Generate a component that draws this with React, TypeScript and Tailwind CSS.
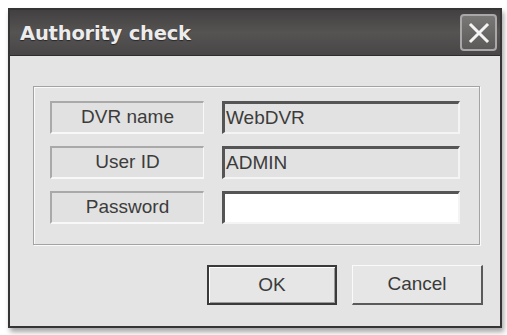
export default function App() {
  return (
    <div className="w-[507px] h-[335px] bg-white pt-[8px] pl-[8px] font-['Liberation_Sans',Arial,sans-serif]">
      <div className="w-[494px] h-[320px] border-2 border-[#353535] bg-[#e4e4e4] flex flex-col shadow-[2px_4px_5px_rgba(0,0,0,0.35)]">
        {/* title bar */}
        <div className="h-[46px] shrink-0 flex items-center justify-between pl-[10px] pr-[3px] bg-gradient-to-b from-[#424040] via-[#565353] to-[#484646] border-b border-[#2e2e2e]">
          <span className="font-['DejaVu_Sans',sans-serif] font-bold text-[19.5px] mt-[3px] text-[#ececec] tracking-[-0.2px] [text-shadow:0_1px_1px_rgba(0,0,0,0.5)]">
            Authority check
          </span>
          <div className="w-[37px] h-[37px] rounded-[4px] border-2 border-[#a9a7a7] bg-gradient-to-b from-[#7a7777] to-[#5c5959] flex items-center justify-center">
            <svg width="24" height="24" viewBox="0 0 24 24">
              <path d="M4 4 L20 20 M20 4 L4 20" stroke="#f4f4f4" strokeWidth="3" strokeLinecap="square" />
            </svg>
          </div>
        </div>

        {/* body */}
        <div className="flex-1 pt-[30px] pl-[23px] pr-[10px] flex flex-col">
          <div className="w-[447px] h-[159px] border border-[#a3a3a3] shadow-[inset_1px_1px_0_#fafafa,1px_1px_0_#fafafa] pt-[14px] pl-[16px] flex flex-col gap-[12px]">
            <Row label="DVR name" value="WebDVR" />
            <Row label="User ID" value="ADMIN" />
            <Row label="Password" value="" white />
          </div>

          <div className="mt-[20px] pl-[174px] flex gap-[15px]">
            <button className="w-[130px] h-[40px] border-2 border-[#3a3a3a] bg-[#e6e6e6] shadow-[inset_1px_1px_0_#fff,inset_-1px_-1px_0_#9a9a9a] text-[19px] text-[#3a3a3a]">
              OK
            </button>
            <button className="w-[131px] h-[40px] border-t border-l border-[#fafafa] border-r-2 border-b-2 border-r-[#5a5a5a] border-b-[#5a5a5a] bg-[#e6e6e6] text-[19px] text-[#3a3a3a]">
              Cancel
            </button>
          </div>
        </div>
      </div>
    </div>
  );
}

function Row({ label, value, white }: { label: string; value: string; white?: boolean }) {
  return (
    <div className="flex gap-[18px] h-[33px]">
      <div className="w-[154px] h-full border-t-2 border-l-2 border-t-[#a9a9a9] border-l-[#a9a9a9] border-b-2 border-r border-b-[#f8f8f8] border-r-[#f8f8f8] bg-[#e1e1e1] flex items-center justify-center text-[19px] text-[#3c3c3c]">
        {label}
      </div>
      <div
        className={
          white
            ? "w-[238px] h-full border-t-[3px] border-l-[3px] border-t-[#555] border-l-[#555] border-b-2 border-r-2 border-b-[#f4f4f4] border-r-[#f4f4f4] bg-white flex items-center pl-[1px] text-[19px] text-[#3c3c3c]"
            : "w-[238px] h-full border-t-[3px] border-l-[3px] border-t-[#555] border-l-[#555] border-b-2 border-r-2 border-b-[#f4f4f4] border-r-[#f4f4f4] bg-[#e2e2e2] flex items-center pl-[1px] text-[19px] text-[#3c3c3c]"
        }
      >
        {value}
      </div>
    </div>
  );
}
